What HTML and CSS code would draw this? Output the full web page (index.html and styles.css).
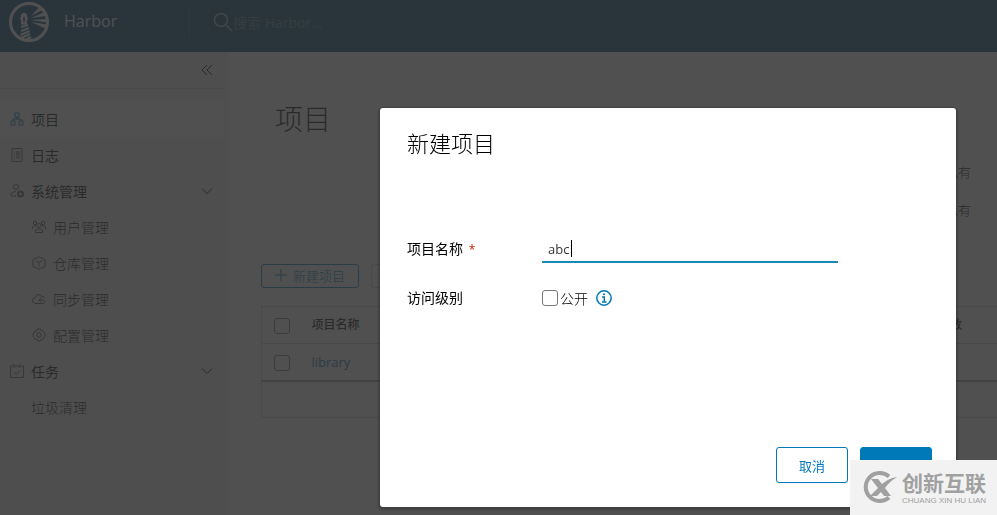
FILE: index.html
```html
<!DOCTYPE html>
<html lang="zh-CN">
<head>
  <meta charset="UTF-8">
  <meta name="viewport" content="width=device-width, initial-scale=1.0">
  <title>Harbor</title>
  <link rel="stylesheet" href="styles.css">
</head>
<body>
  <header class="header">
    <a class="brand" href="#">
      <svg class="logo" viewBox="0 0 40 40" fill="none" stroke="currentColor">
        <circle cx="20" cy="20" r="18.500" stroke-width="3"/>
        <path fill="currentColor" stroke="none" d="M15 10.500l3 1.700v3.300h1v2h-1v5h-6v-5h-1v-2h1v-3.300z"/>
        <path stroke="#004a70" stroke-width="1.500" d="M15 15v5"/>
        <path stroke-width="2" d="M12 25l7-2M12 29l8-3M11.500 33l9-4M12 36l9-4M17 37.500l5-2.500"/>
        <path fill="currentColor" stroke="none" d="M22 14L30 5.500l3 2.500zM22 16l12.500-5.500 2 3.500zM22 18l16-1v3.500zM22 20l16 2.500-1.500 4z"/>
      </svg>
      <span class="brand-name">Harbor</span>
    </a>
    <form class="search">
      <svg class="search-icon" viewBox="0 0 20 20" fill="none" stroke="currentColor" stroke-width="1.500">
        <circle cx="8" cy="8" r="6.500"/>
        <path d="M13 13l6 6"/>
      </svg>
      <input type="text" aria-label="搜索" placeholder="搜索 Harbor...">
    </form>
  </header>

  <div class="layout">
    <nav class="sidebar">
      <div class="collapse-row">
        <button type="button" class="collapse" aria-label="收起">
          <svg width="14" height="14" viewBox="0 0 14 14" fill="none" stroke="currentColor"><path d="M7 2L2 7l5 5M12 2L7 7l5 5"/></svg>
        </button>
      </div>
      <ul class="nav-list">
        <li><a class="nav-item active" href="#">
          <svg class="icon" viewBox="0 0 14 14"><path d="M5 1h4v4H5zM1 9h4v4H1zM9 9h4v4H9zM7 5v2M3 9V7h8v2"/></svg>
          项目</a></li>
        <li><a class="nav-item" href="#">
          <svg class="icon" viewBox="0 0 14 14"><path d="M2 .500h10v13H2zM4 4h1M6 4h4M4 6h1M6 6h4M4 8h1M6 8h4M4 10h1M6 10h4"/></svg>
          日志</a></li>
        <li><a class="nav-item" href="#">
          <svg class="icon" viewBox="0 0 14 14"><circle cx="6" cy="3" r="2.500"/><path d="M6 12H1V9.500Q3 7.500 6 7.500"/><circle cx="10.500" cy="10" r="2.500" stroke-width="2"/></svg>
          系统管理
          <svg class="chevron" viewBox="0 0 12 12"><path d="M1 3.500l5 5 5-5"/></svg></a></li>
        <li><a class="nav-item sub" href="#">
          <svg class="icon" viewBox="0 0 14 14"><circle cx="7" cy="5.500" r="2"/><circle cx="3" cy="3" r="1.700"/><circle cx="11" cy="3" r="1.700"/><path d="M3.500 12.500V10Q7 7.500 10.500 10v2.500zM.500 9V7Q1.500 5.500 4 6M13.500 9V7Q12.500 5.500 10 6"/></svg>
          用户管理</a></li>
        <li><a class="nav-item sub" href="#">
          <svg class="icon" viewBox="0 0 14 14"><path d="M7 .800L13 3.500v7L7 13.200 1 10.500v-7zM3.500 4.500L7 6.500l3.500-2M7 6.500v4"/></svg>
          仓库管理</a></li>
        <li><a class="nav-item sub" href="#">
          <svg class="icon" viewBox="0 0 14 14"><path d="M12.500 5H9.500Q9 2.500 6.500 2.500 4 2.500 3.500 5.500.500 6 .500 8.500T3 11.500h8q2-.500 2-2.500M7 8h5M9 6L7 8l2 2"/></svg>
          同步管理</a></li>
        <li><a class="nav-item sub" href="#">
          <svg class="icon" viewBox="0 0 14 14"><path d="M5.500 1h3l.500 1.500 2 .500 2 3v2l-2 3-2 .500L8.500 13h-3L5 11.500 3 11 1 8V6l2-3 2-.500z"/><circle cx="7" cy="7" r="2.300"/></svg>
          配置管理</a></li>
        <li><a class="nav-item" href="#">
          <svg class="icon" viewBox="0 0 14 14"><path d="M3 2H.500v11.500h13V2H11M5 2h4M4 0v4M10 0v4M4 8l2.500 2.500L10.500 6"/></svg>
          任务
          <svg class="chevron" viewBox="0 0 12 12"><path d="M1 3.500l5 5 5-5"/></svg></a></li>
        <li><a class="nav-item plain" href="#">垃圾清理</a></li>
      </ul>
    </nav>

    <main class="content">
      <h1>项目</h1>
      <div class="stats">
        <div>私有</div>
        <div>私有</div>
      </div>
      <div class="toolbar">
        <button type="button" class="btn-sm">
          <svg width="12" height="12" viewBox="0 0 12 12" fill="none" stroke="currentColor"><path d="M6 0v12M0 6h12"/></svg>
          新建项目
        </button>
        <button type="button" class="btn-sm" disabled>删除</button>
      </div>
      <table class="datagrid">
        <thead>
          <tr>
            <th class="col-check"><input type="checkbox" aria-label="全选"></th>
            <th>项目名称</th>
            <th class="col-count">镜像仓库数</th>
          </tr>
        </thead>
        <tbody>
          <tr>
            <td class="col-check"><input type="checkbox" aria-label="library"></td>
            <td><a href="#">library</a></td>
            <td></td>
          </tr>
        </tbody>
        <tfoot>
          <tr><td colspan="3"></td></tr>
        </tfoot>
      </table>
    </main>
  </div>

  <div class="backdrop">
    <form class="modal" role="dialog" aria-labelledby="modal-title">
      <h2 id="modal-title">新建项目</h2>
      <div class="modal-body">
        <div class="form-row">
          <label class="form-label" for="project-name">项目名称 <span class="required">*</span></label>
          <div class="text-field">
            <input type="text" id="project-name" value="abc">
            <span class="caret"></span>
          </div>
        </div>
        <div class="form-row">
          <span class="form-label">访问级别</span>
          <input type="checkbox" id="project-public">
          <label class="check-label" for="project-public">公开</label>
          <svg class="info" viewBox="0 0 16 16" fill="none" stroke="currentColor" stroke-width="1.500">
            <circle cx="8" cy="8" r="7.200"/>
            <path d="M6 7h2.300v5M6 12h4.500"/>
            <circle cx="8" cy="4.300" r="1" fill="currentColor" stroke="none"/>
          </svg>
        </div>
      </div>
      <div class="modal-footer">
        <button type="button" class="btn">取消</button>
        <button type="submit" class="btn primary">确定</button>
      </div>
    </form>
  </div>

  <div class="watermark">
    <svg class="watermark-logo" viewBox="0 0 36 34">
      <path fill="none" stroke="currentColor" stroke-width="4" d="M27 6.500A14 14 0 1 0 27 27.500"/>
      <path fill="currentColor" d="M9 9h7l4 5q7-6 15-7-8 5-12 11l6 8h-7l-3-4-4 4H8l8-8z"/>
    </svg>
    <div class="watermark-text">
      <strong>创新互联</strong>
      <small>CHUANG XIN HU LIAN</small>
    </div>
  </div>
</body>
</html>
```
FILE: styles.css
```css
:root {
  --header: #004a70;
  --primary: #0079b8;
  --text: #000;
  --muted: #565656;
  --border: #ccc;
}
* {
  box-sizing: border-box;
}
body {
  margin: 0;
  min-height: 100vh;
  display: flex;
  flex-direction: column;
  overflow: hidden;
  background: #fafafa;
  color: var(--text);
  font-family: "Open Sans", "Noto Sans CJK SC", sans-serif;
  font-size: 14px;
  font-weight: 300;
}
button, input {
  font: inherit;
  color: inherit;
}
a {
  color: var(--primary);
  text-decoration: none;
}
input[type="checkbox"] {
  appearance: none;
  width: 16px;
  height: 16px;
  margin: 0;
  border: 1px solid #777;
  border-radius: 3px;
  vertical-align: middle;
}

/* Header */
.header {
  display: flex;
  align-items: center;
  height: 52px;
  padding: 0 0 8px 9px;
  background: var(--header);
  color: #fff;
}
.brand {
  display: flex;
  align-items: center;
  gap: 15px;
  width: 181px;
  height: 32px;
  border-right: 1px solid #1b5f83;
  color: #fff;
}
.logo {
  width: 40px;
  height: 40px;
}
.brand-name {
  padding-bottom: 3px;
  font-size: 16px;
  font-weight: 400;
}
.search {
  display: flex;
  align-items: center;
  padding-left: 23px;
  color: #a0bccb;
}
.search-icon {
  width: 20px;
  height: 20px;
}
.search input {
  width: 160px;
  padding: 0;
  border: 0;
  background: none;
  font-weight: 400;
}
.search input::placeholder {
  color: #49809c;
}

/* Side navigation */
.layout {
  display: flex;
  flex: 1;
}
.sidebar {
  flex: 0 0 229px;
  padding-right: 4px;
  background: #eee;
  border-right: 1px solid #f4f4f4;
}
.collapse-row {
  display: flex;
  justify-content: flex-end;
  align-items: center;
  height: 37px;
  padding-right: 10px;
  border-bottom: 1px solid #ccc;
}
.collapse {
  display: flex;
  padding: 0;
  border: 0;
  background: none;
}
.nav-list {
  list-style: none;
  margin: 12px 0 0;
  padding: 0;
}
.nav-item {
  display: flex;
  align-items: center;
  gap: 7px;
  height: 36px;
  padding: 0 11px 1px 10px;
  color: var(--text);
  font-weight: 400;
}
.nav-item.active {
  background: #fff;
}
.nav-item.active .icon {
  color: var(--primary);
}
.nav-item.sub {
  padding-left: 32px;
  font-weight: 300;
}
.nav-item.plain {
  padding-left: 31px;
  font-weight: 300;
}
.icon, .chevron {
  width: 14px;
  height: 14px;
  fill: none;
  stroke: currentColor;
  color: var(--muted);
}
.chevron {
  width: 12px;
  height: 12px;
  margin-left: auto;
  color: var(--text);
}

/* Projects */
.content {
  flex: 1;
  min-width: 0;
  padding: 49px 0 0 32px;
}
h1 {
  margin: 0 0 16px;
  padding-left: 14px;
  font-size: 28px;
  font-weight: 300;
  line-height: 36px;
}
.stats {
  display: flex;
  flex-direction: column;
  align-items: flex-end;
  padding-right: 26px;
  font-size: 13px;
  line-height: 38px;
}
.toolbar {
  display: flex;
  gap: 12px;
  margin: 35px 0 18px;
}
.btn-sm {
  display: flex;
  align-items: center;
  justify-content: center;
  gap: 6px;
  width: 98px;
  height: 24px;
  padding: 0 0 2px;
  border: 1px solid var(--primary);
  border-radius: 3px;
  background: none;
  color: var(--primary);
  font-size: 13px;
}
.btn-sm:disabled {
  border-color: var(--border);
  color: var(--muted);
}
.datagrid {
  width: 100%;
  table-layout: fixed;
  border-collapse: collapse;
  border: 1px solid var(--border);
  border-right: 0;
  font-size: 13px;
}
.datagrid th, .datagrid td {
  height: 37px;
  padding: 0 10px;
  border-bottom: 1px solid var(--border);
  text-align: left;
}
.datagrid th {
  padding-bottom: 2px;
  font-size: 12px;
  font-weight: 500;
}
.datagrid a {
  font-weight: 400;
}
.datagrid tbody td {
  border-bottom: 2px solid #aaa;
}
.datagrid .col-check {
  width: 40px;
  padding: 0 0 0 12px;
}
.datagrid .col-count {
  width: 105px;
}

/* Modal */
.backdrop {
  position: fixed;
  inset: 0;
  display: flex;
  justify-content: flex-end;
  align-items: flex-end;
  padding: 0 41px 8px 0;
  background: rgba(49, 49, 49, 0.85);
}
.modal {
  width: 576px;
  padding: 17px 24px 24px 27px;
  border-radius: 3px;
  background: #fff;
  box-shadow: 0 1px 2px 2px rgba(0, 0, 0, 0.2);
}
.modal h2 {
  margin: 0;
  font-size: 22px;
  font-weight: 300;
  line-height: 36px;
}
.modal-body {
  min-height: 286px;
  padding-top: 74px;
}
.form-row {
  display: flex;
  align-items: center;
  height: 28px;
  margin-bottom: 21px;
}
.form-label {
  width: 135px;
  padding-bottom: 2px;
  font-weight: 400;
}
.required {
  margin-left: 2px;
  color: #c92100;
  font-size: 12px;
}
.text-field {
  position: relative;
  width: 296px;
}
.text-field input {
  width: 100%;
  height: 28px;
  padding: 1px 6px 0;
  border: 0;
  border-bottom: 2px solid #1c87b0;
  outline: none;
  color: #333;
  font-size: 13px;
  font-weight: 400;
}
.caret {
  position: absolute;
  top: 5px;
  left: 29px;
  width: 1px;
  height: 17px;
  background: #000;
}
.check-label {
  margin: 0 8px 0 2px;
}
.info {
  width: 16px;
  height: 16px;
  color: var(--primary);
}
.modal-footer {
  display: flex;
  justify-content: flex-end;
  gap: 12px;
}
.btn {
  width: 72px;
  height: 36px;
  padding: 0;
  border: 1px solid var(--primary);
  border-radius: 3px;
  background: #fff;
  color: var(--primary);
  font-size: 13px;
  font-weight: 400;
}
.btn.primary {
  padding-top: 4px;
  background: var(--primary);
  color: #fff;
}

/* Watermark */
.watermark {
  position: fixed;
  right: 0;
  bottom: 0;
  display: flex;
  align-items: center;
  gap: 4px;
  width: 147px;
  height: 55px;
  padding: 0 8px 2px 12px;
  background: #f2f2f2;
  color: #a0a0a0;
  white-space: nowrap;
}
.watermark-logo {
  flex: none;
  width: 36px;
  height: 34px;
}
.watermark-text strong {
  display: block;
  font-size: 21px;
  font-weight: 700;
  line-height: 28px;
}
.watermark-text small {
  display: block;
  font-family: "Liberation Sans", sans-serif;
  font-size: 8px;
  font-weight: 400;
  line-height: 8px;
}
```
